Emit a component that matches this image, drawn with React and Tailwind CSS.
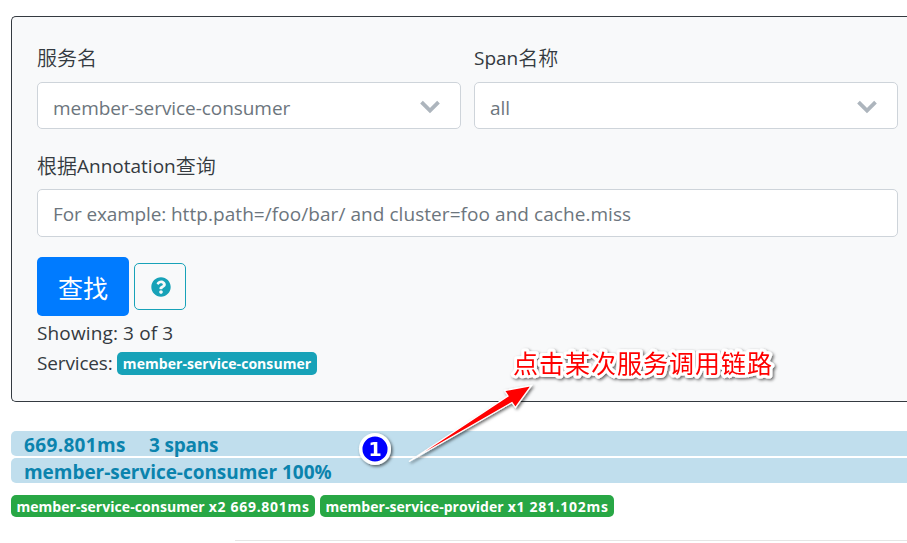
import React from "react";
import { FaQuestionCircle } from "react-icons/fa";

function Select({ children }) {
  return (
    <div className="flex h-[47px] w-[424px] items-center justify-between rounded-[5px] border border-[#ced4da] bg-white pl-[15px] pr-5 text-[#6c757d]">
      <span className="relative top-[2px]">{children}</span>
      <svg className="relative top-[1px] h-[14px] w-5" viewBox="0 0 20 14" fill="none" stroke="#adb5bd" strokeWidth="3.8">
        <path d="M1.5 2.2 10 10.5 18.5 2.2" />
      </svg>
    </div>
  );
}

function Cjk({ children }) {
  return <span className="relative top-px font-['Noto_Sans_CJK_SC',sans-serif] text-[20px] font-[350] leading-none">{children}</span>;
}

function Tag({ children, className }) {
  return (
    <span className={`flex items-center justify-center rounded-[5px] text-[14px] font-bold leading-none text-white ${className}`}>
      {children}
    </span>
  );
}

function TraceTag({ name, detail, className }) {
  return (
    <Tag className={`h-[22px] gap-1 bg-[#28a745] pt-px ${className}`}>
      <span className="tracking-[0.05px]">{name}</span>
      <span className="tracking-[0.7px]">{detail}</span>
    </Tag>
  );
}

function Annotations() {
  return (
    <svg className="pointer-events-none absolute left-0 top-0 h-[543px] w-[907px]" viewBox="0 0 907 543">
      <defs>
        <filter id="shade" x="-20%" y="-20%" width="150%" height="150%">
          <feDropShadow dx="1.5" dy="1.5" stdDeviation="1.5" floodColor="#000" floodOpacity="0.6" />
        </filter>
      </defs>
      <g filter="url(#shade)">
        <path d="M409 461.5 508 396 504.5 390.5 531.5 385.5 515.5 407.5 512 402.5Z" fill="#f00" stroke="#fff" strokeWidth="1.3" />
      </g>
      <g filter="url(#shade)">
        <circle cx="375" cy="449" r="14.3" fill="#00f" stroke="#fff" strokeWidth="3.5" />
        <text x="375" y="456" textAnchor="middle" fill="#fff" fontFamily="'DejaVu Sans', sans-serif" fontWeight="700" fontSize="19">1</text>
      </g>
      <g filter="url(#shade)">
        <text
          x="513"
          y="372.5"
          textLength="259"
          fill="#f00"
          stroke="#fff"
          strokeWidth="6"
          strokeLinejoin="round"
          paintOrder="stroke"
          fontFamily="'Noto Sans CJK SC', sans-serif"
          fontWeight="400"
          fontSize="25"
        >
          点击某次服务调用链路
        </text>
      </g>
    </svg>
  );
}

export default function App() {
  return (
    <div className="relative h-[543px] w-[907px] overflow-hidden whitespace-nowrap bg-white pl-[11px] pt-4 font-['Open_Sans','Noto_Sans_CJK_SC',sans-serif] text-[19px] leading-[30px] text-[#343a40]">
      <section className="h-[386px] rounded-l-[5px] border border-r-0 border-[#343a40] bg-[#f8f9fa] pl-[25px] pt-[26px]">
        <div className="flex gap-[13px]">
          <div className="flex flex-col gap-[9px]">
            <label className="h-[30px]"><Cjk>服务名</Cjk></label>
            <Select><span className="tracking-[-0.06px]">member-service-consumer</span></Select>
          </div>
          <div className="flex flex-col gap-[9px]">
            <label className="h-[30px]">Span<Cjk>名称</Cjk></label>
            <Select>all</Select>
          </div>
        </div>
        <div className="mt-[22px] flex flex-col gap-2">
          <label className="h-[30px]"><Cjk>根据</Cjk>Annotation<Cjk>查询</Cjk></label>
          <div className="flex h-12 w-[861px] items-center rounded-[5px] border border-[#ced4da] bg-white pl-[15px] pt-[2px] text-[#6c757d]">
            <span className="tracking-[-0.14px]">For example:&nbsp;</span>
            <span className="tracking-[0.06px]">http.path=/foo/bar/ and cluster=foo and cache.miss</span>
          </div>
        </div>
        <div className="mt-5 flex items-center gap-[5px]">
          <button className="flex h-[59px] w-[92px] items-center justify-center rounded-[5px] bg-[#007bff] font-['Noto_Sans_CJK_SC',sans-serif] text-[25px] font-normal text-white">查找</button>
          <button className="flex h-[47px] w-[52px] items-center justify-center rounded-[5px] border border-[#17a2b8] pl-px pt-px text-[#17a2b8]">
            <FaQuestionCircle size={20} />
          </button>
        </div>
        <div className="mt-[2px] tracking-[0.13px]">Showing: 3 of 3</div>
        <div className="flex items-center gap-[5px]">
          <span className="w-[75px] tracking-[-0.15px]">Services:</span>
          <Tag className="h-[23px] w-[200px] bg-[#17a2b8] pt-[2px]"><span className="tracking-[0.05px]">member-service-consumer</span></Tag>
        </div>
      </section>
      <section className="mt-[29px] flex flex-col gap-[2px] font-bold text-[#0b83ad]">
        <div className="flex h-[25px] items-center rounded-l-[5px] bg-[#c0deed] pl-[13px] pt-[3px]">
          <span className="w-[125px] tracking-[0.35px]">669.801ms</span>
          <span className="tracking-[-0.2px]">3 spans</span>
        </div>
        <div className="flex h-[25px] items-center rounded-l-[5px] bg-[#c0deed] pl-[13px] pt-[3px]">
          <span className="tracking-[-0.04px]">member-service-consumer 100%</span>
        </div>
      </section>
      <div className="mt-3 flex gap-[5px]">
        <TraceTag className="w-[304px]" name="member-service-consumer" detail="x2 669.801ms" />
        <TraceTag className="w-[294px]" name="member-service-provider" detail="x1 281.102ms" />
      </div>
      <div className="ml-[224px] mt-[23px] h-px bg-[#e5e5e5]" />
      <Annotations />
    </div>
  );
}
